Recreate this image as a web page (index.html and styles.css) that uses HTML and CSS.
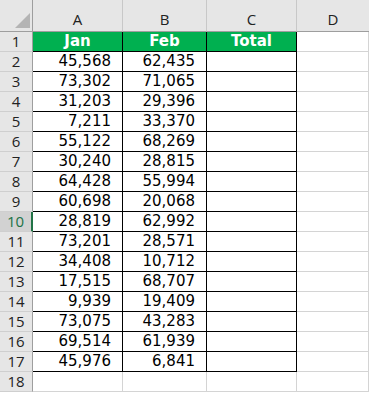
FILE: index.html
```html
<!DOCTYPE html>
<html>
<head>
<meta charset="utf-8">
<link rel="stylesheet" href="styles.css">
</head>
<body>
<div class="sheet">
  <div class="corner"><span class="tri"></span></div>
  <div class="colh">A</div><div class="colh">B</div><div class="colh">C</div><div class="colh last">D</div>

  <div class="rowh">1</div><div class="c t hd">Jan</div><div class="c t hd">Feb</div><div class="c t hd">Total</div><div class="c g"></div>
  <div class="rowh">2</div><div class="c t n">45,568</div><div class="c t n">62,435</div><div class="c t"></div><div class="c g"></div>
  <div class="rowh">3</div><div class="c t n">73,302</div><div class="c t n">71,065</div><div class="c t"></div><div class="c g"></div>
  <div class="rowh">4</div><div class="c t n">31,203</div><div class="c t n">29,396</div><div class="c t"></div><div class="c g"></div>
  <div class="rowh">5</div><div class="c t n">7,211</div><div class="c t n">33,370</div><div class="c t"></div><div class="c g"></div>
  <div class="rowh">6</div><div class="c t n">55,122</div><div class="c t n">68,269</div><div class="c t"></div><div class="c g"></div>
  <div class="rowh">7</div><div class="c t n">30,240</div><div class="c t n">28,815</div><div class="c t"></div><div class="c g"></div>
  <div class="rowh">8</div><div class="c t n">64,428</div><div class="c t n">55,994</div><div class="c t"></div><div class="c g"></div>
  <div class="rowh">9</div><div class="c t n">60,698</div><div class="c t n">20,068</div><div class="c t"></div><div class="c g"></div>
  <div class="rowh sel">10</div><div class="c t n">28,819</div><div class="c t n">62,992</div><div class="c t"></div><div class="c g"></div>
  <div class="rowh">11</div><div class="c t n">73,201</div><div class="c t n">28,571</div><div class="c t"></div><div class="c g"></div>
  <div class="rowh">12</div><div class="c t n">34,408</div><div class="c t n">10,712</div><div class="c t"></div><div class="c g"></div>
  <div class="rowh">13</div><div class="c t n">17,515</div><div class="c t n">68,707</div><div class="c t"></div><div class="c g"></div>
  <div class="rowh">14</div><div class="c t n">9,939</div><div class="c t n">19,409</div><div class="c t"></div><div class="c g"></div>
  <div class="rowh">15</div><div class="c t n">73,075</div><div class="c t n">43,283</div><div class="c t"></div><div class="c g"></div>
  <div class="rowh">16</div><div class="c t n">69,514</div><div class="c t n">61,939</div><div class="c t"></div><div class="c g"></div>
  <div class="rowh">17</div><div class="c t n">45,976</div><div class="c t n">6,841</div><div class="c t"></div><div class="c g"></div>
  <div class="rowh">18</div><div class="c g"></div><div class="c g"></div><div class="c g"></div><div class="c g"></div>
</div>
</body>
</html>
```

FILE: styles.css
```css
html, body {
  margin: 0;
  padding: 0;
  background: #ffffff;
}
.sheet {
  display: grid;
  grid-template-columns: 33px 90px 84px 90px 1fr;
  grid-template-rows: 32px repeat(18, 20px);
  width: 369px;
  height: 393px;
  overflow: hidden;
  font-family: "DejaVu Sans", Verdana, sans-serif;
  font-size: 15px;
  color: #000;
}
.corner {
  background: #e6e6e6;
  border-right: 1px solid #9e9e9e;
  border-bottom: 1px solid #9e9e9e;
  box-sizing: border-box;
  position: relative;
}
.tri {
  position: absolute;
  left: 15px;
  top: 13px;
  width: 0;
  height: 0;
  border-left: 15px solid transparent;
  border-bottom: 15px solid #b4b4b4;
}
.colh {
  background: #e6e6e6;
  border-right: 1px solid #c8c8c8;
  border-bottom: 1px solid #9e9e9e;
  box-sizing: border-box;
  display: flex;
  align-items: flex-end;
  justify-content: center;
  padding-bottom: 3px;
  font-family: "Open Sans", "Noto Sans", sans-serif;
  font-size: 15px;
  color: #222;
  line-height: 18px;
}
.colh.last { border-right: none; }
.rowh {
  background: #e6e6e6;
  border-right: 1px solid #9e9e9e;
  border-bottom: 1px solid #cfcfcf;
  box-sizing: border-box;
  display: flex;
  align-items: center;
  justify-content: center;
  font-family: "Open Sans", "Noto Sans", sans-serif;
  font-size: 15px;
  color: #222;
  line-height: 19px;
}
.rowh.sel {
  background: #d2d2d2;
  color: #217346;
  border-right: 2px solid #217346;
}
.c {
  box-sizing: border-box;
  display: flex;
  align-items: center;
  line-height: 19px;
  white-space: nowrap;
}
.c.g {
  border-right: 1px solid #d4d4d4;
  border-bottom: 1px solid #d4d4d4;
}
.c.t {
  border-right: 1px solid #000;
  border-bottom: 1px solid #000;
}
.c.n {
  justify-content: flex-end;
  padding-right: 11px;
}
.c.hd {
  background: #00b050;
  color: #fff;
  font-weight: bold;
  justify-content: center;
  font-size: 15px;
}
```
